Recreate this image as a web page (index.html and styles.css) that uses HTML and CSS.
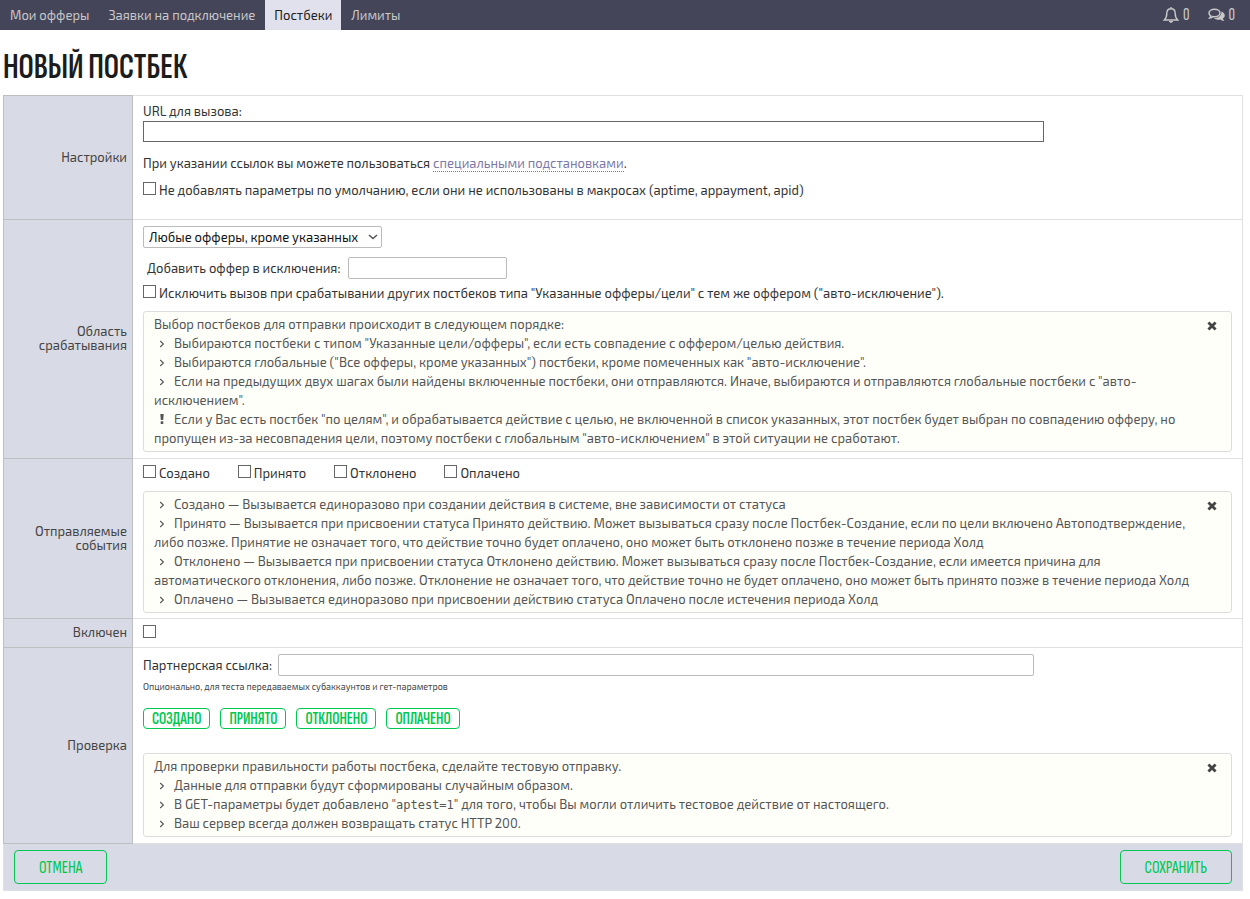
FILE: index.html
```html
<!DOCTYPE html>
<html lang="ru">
<head>
<meta charset="utf-8">
<title>Новый постбек</title>
<link rel="stylesheet" href="styles.css">
</head>
<body>
<svg class="sprite" aria-hidden="true">
  <symbol id="close" viewBox="0 0 10 10"><path d="M2.4 2.4L7.6 7.6M7.6 2.4L2.4 7.6" stroke="currentColor" stroke-width="2.8" stroke-linecap="square"/></symbol>
  <symbol id="angle" viewBox="0 0 6 8"><path d="M1.2 1L4.4 4L1.2 7" fill="none" stroke="currentColor" stroke-width="1.1"/></symbol>
  <symbol id="bang" viewBox="0 0 6 10"><path d="M1.3 0H4.7L4.2 6H1.8ZM1.7 7.2H4.3V10H1.7Z" fill="currentColor"/></symbol>
</svg>
<header class="topbar">
  <nav class="menu">
    <a href="#">Мои офферы</a>
    <a href="#">Заявки на подключение</a>
    <a href="#" class="active">Постбеки</a>
    <a href="#">Лимиты</a>
  </nav>
  <div class="counters">
    <a href="#" aria-label="Уведомления"><svg width="16" height="18" viewBox="0 0 16 18" fill="none" stroke="currentColor" stroke-width="1.4"><path d="M8 1V2.5M1.3 14C3.5 12 3.8 10 3.8 7.2C3.8 4.5 5.5 2.7 8 2.7S12.2 4.5 12.2 7.2C12.2 10 12.5 12 14.7 14Z"/><path d="M6 15H10C10 17.4 6 17.4 6 15Z" fill="currentColor" stroke="none"/></svg><span>0</span></a>
    <a href="#" aria-label="Сообщения"><svg width="17" height="14" viewBox="0 0 17 14"><path d="M6.5 1.2C9.6 1.2 12 2.9 12 5S9.6 8.8 6.5 8.8C5.9 8.8 5.3 8.7 4.8 8.6C3.8 9.5 2.8 9.8 1.8 9.9C2.4 9.3 2.7 8.7 2.8 7.9C1.6 7.2 1 6.2 1 5C1 2.9 3.4 1.2 6.5 1.2Z" fill="none" stroke="currentColor" stroke-width="1.5"/><path d="M13.3 3.6C17.5 5 17.7 8.8 14.9 10.4C15 11.3 15.6 12 16.4 12.9C14.6 13 13.4 12.4 12.4 11.5C10 12 7.5 11.5 6.1 10.2C10.5 10.2 14 7.4 13.3 3.6Z" fill="currentColor"/></svg><span>0</span></a>
  </div>
</header>
<main>
  <h1>Новый постбек</h1>
  <form class="form">
    <section class="row">
      <h2 class="name">Настройки</h2>
      <div class="body settings">
        <label class="line" for="url">URL для вызова:</label>
        <input class="url" id="url" type="text">
        <p class="line note">При указании ссылок вы можете пользоваться <a href="#">специальными подстановками</a>.</p>
        <label class="check"><input type="checkbox">Не добавлять параметры по умолчанию, если они не использованы в макросах (aptime, appayment, apid)</label>
      </div>
    </section>
    <section class="row">
      <h2 class="name">Область срабатывания</h2>
      <div class="body">
        <div class="select"><select aria-label="Офферы"><option>Любые офферы, кроме указанных</option></select><svg width="10" height="6" viewBox="0 0 10 6"><path d="M1 1L5 4.6L9 1" fill="none" stroke="currentColor" stroke-width="1.5"/></svg></div>
        <div class="field exclude"><label for="offer">Добавить оффер в исключения:</label><input id="offer" type="text"></div>
        <label class="check auto"><input type="checkbox">Исключить вызов при срабатывании других постбеков типа "Указанные офферы/цели" с тем же оффером ("авто-исключение").</label>
        <div class="hint">
          <button type="button" class="close" aria-label="Закрыть"><svg><use href="#close"/></svg></button>
          <p>Выбор постбеков для отправки происходит в следующем порядке:</p>
          <p><svg class="mark"><use href="#angle"/></svg>Выбираются постбеки с типом "Указанные цели/офферы", если есть совпадение с оффером/целью действия.</p>
          <p><svg class="mark"><use href="#angle"/></svg>Выбираются глобальные ("Все офферы, кроме указанных") постбеки, кроме помеченных как "авто-исключение".</p>
          <p><svg class="mark"><use href="#angle"/></svg>Если на предыдущих двух шагах были найдены включенные постбеки, они отправляются. Иначе, выбираются и отправляются глобальные постбеки с "авто-<br>исключением".</p>
          <p><svg class="mark bang"><use href="#bang"/></svg>Если у Вас есть постбек "по целям", и обрабатывается действие с целью, не включенной в список указанных, этот постбек будет выбран по совпадению офферу, но<br>пропущен из-за несовпадения цели, поэтому постбеки с глобальным "авто-исключением" в этой ситуации не сработают.</p>
        </div>
      </div>
    </section>
    <section class="row">
      <h2 class="name">Отправляемые события</h2>
      <div class="body events">
        <div class="checks">
          <label class="check"><input type="checkbox">Создано</label>
          <label class="check"><input type="checkbox">Принято</label>
          <label class="check"><input type="checkbox">Отклонено</label>
          <label class="check"><input type="checkbox">Оплачено</label>
        </div>
        <div class="hint">
          <button type="button" class="close" aria-label="Закрыть"><svg><use href="#close"/></svg></button>
          <p><svg class="mark"><use href="#angle"/></svg>Создано — Вызывается единоразово при создании действия в системе, вне зависимости от статуса</p>
          <p><svg class="mark"><use href="#angle"/></svg>Принято — Вызывается при присвоении статуса Принято действию. Может вызываться сразу после Постбек-Создание, если по цели включено Автоподтверждение,<br>либо позже. Принятие не означает того, что действие точно будет оплачено, оно может быть отклонено позже в течение периода Холд</p>
          <p><svg class="mark"><use href="#angle"/></svg>Отклонено — Вызывается при присвоении статуса Отклонено действию. Может вызываться сразу после Постбек-Создание, если имеется причина для<br>автоматического отклонения, либо позже. Отклонение не означает того, что действие точно не будет оплачено, оно может быть принято позже в течение периода Холд</p>
          <p><svg class="mark"><use href="#angle"/></svg>Оплачено — Вызывается единоразово при присвоении действию статуса Оплачено после истечения периода Холд</p>
        </div>
      </div>
    </section>
    <section class="row">
      <h2 class="name">Включен</h2>
      <div class="body enabled"><label class="check"><input type="checkbox" aria-label="Включен"></label></div>
    </section>
    <section class="row">
      <h2 class="name">Проверка</h2>
      <div class="body">
        <div class="field partner"><label for="partner">Партнерская ссылка:</label><input id="partner" type="text"></div>
        <p class="small">Опционально, для теста передаваемых субаккаунтов и гет-параметров</p>
        <div class="tests">
          <button type="button">Создано</button>
          <button type="button">Принято</button>
          <button type="button">Отклонено</button>
          <button type="button">Оплачено</button>
        </div>
        <div class="hint">
          <button type="button" class="close" aria-label="Закрыть"><svg><use href="#close"/></svg></button>
          <p>Для проверки правильности работы постбека, сделайте тестовую отправку.</p>
          <p><svg class="mark"><use href="#angle"/></svg>Данные для отправки будут сформированы случайным образом.</p>
          <p><svg class="mark"><use href="#angle"/></svg>В GET-параметры будет добавлено "<code>aptest=1</code>" для того, чтобы Вы могли отличить тестовое действие от настоящего.</p>
          <p><svg class="mark"><use href="#angle"/></svg>Ваш сервер всегда должен возвращать статус HTTP 200.</p>
        </div>
      </div>
    </section>
    <footer class="actions">
      <button type="button">Отмена</button>
      <button type="submit">Сохранить</button>
    </footer>
  </form>
</main>
</body>
</html>
```
FILE: styles.css
```css
* { box-sizing: border-box; }
body {
  margin: 0;
  background: #fff;
  color: #333;
  font: 13px/20px "Exo 2", Roboto, sans-serif;
}
p, h1, h2 { margin: 0; font-weight: inherit; }
input, select, button { font: inherit; margin: 0; }
svg { flex: none; }
.sprite { display: none; }

.topbar {
  display: flex;
  justify-content: space-between;
  height: 30px;
  padding: 0 15px 0 1px;
  background: #45455a;
  line-height: 30px;
}
.menu, .counters { display: flex; }
.topbar a { color: #c8c8c8; text-decoration: none; white-space: nowrap; }
.menu { gap: 1px; }
.menu a { padding: 0 9px; }
.menu .active { background: #e0e1ec; color: #222; }
.counters { gap: 18px; }
.counters a {
  display: flex;
  align-items: center;
  gap: 4px;
  font-family: "Sofia Sans Extra Condensed", Oswald, "Roboto Condensed", sans-serif;
  font-size: 18px;
}

main { padding: 0 7px 0 3px; }
h1 {
  padding: 18px 0 7px;
  color: #1c1c1c;
  font: 600 36px/40px "Sofia Sans Extra Condensed", "Fira Sans Extra Condensed", Oswald, sans-serif;
  text-transform: uppercase;
}
.form { border: solid #e0e0e0; border-width: 0 1px 1px 0; }
.row { display: flex; }
.name {
  display: flex;
  flex: none;
  align-items: center;
  justify-content: flex-end;
  width: 130px;
  padding: 0 5px 2px 20px;
  border: solid #bfbfc1;
  border-width: 1px 1px 0;
  background: #d8dae5;
  color: #444;
  font-size: 13px;
  line-height: 14px;
  text-align: right;
}
.body {
  flex: 1;
  min-width: 0;
  padding: 6px 10px;
  border-top: 1px solid #e0e0e0;
}
.row:last-of-type .name { border-bottom-width: 1px; }
.row:last-of-type .body { border-bottom: 1px solid #e0e0e0; }
.settings { padding: 5px 10px 19px; }
.line { display: block; }
.note { margin: 11px 0 7px; }
.note a { color: #7b78a8; text-decoration: none; border-bottom: 1px dotted #7b78a8; }
input[type="text"] {
  height: 22px;
  padding: 0 4px;
  border: 1px solid #bbb;
  border-radius: 2px;
  background: #fff;
}
input.url {
  display: block;
  width: 901px;
  max-width: 100%;
  height: 21px;
  border-color: #666;
  border-radius: 0;
}
.check { display: flex; gap: 3px; }
.check input {
  appearance: none;
  flex: none;
  width: 13px;
  height: 13px;
  margin-top: 2px;
  border: 1px solid #666;
  background: #fff;
}
.select { position: relative; width: 239px; color: #555; }
.select select {
  display: block;
  appearance: none;
  width: 100%;
  height: 22px;
  padding: 0 15px 0 5px;
  border: 1px solid #bbb;
  border-radius: 2px;
  background: #fff;
  color: #111;
}
.select svg { position: absolute; top: 8px; right: 4px; pointer-events: none; }
.field { display: flex; align-items: center; gap: 3px; }
.exclude { margin: 9px 0 4px; padding-left: 4px; }
.exclude label { min-width: 198px; }
.exclude input { width: 159px; }
.partner { max-width: 891px; }
.partner label { min-width: 132px; }
.partner input { flex: 1; min-width: 0; }

.hint {
  position: relative;
  margin-top: 8px;
  padding: 3px 10px;
  border: 1px solid #ddd;
  border-radius: 3px;
  background: #fffffa;
  color: #555;
  line-height: 19px;
}
.mark { width: 6px; height: 8px; margin: 0 9px 0 5px; }
.bang { height: 10px; }
.close {
  position: absolute;
  top: 9px;
  right: 14px;
  padding: 0;
  border: 0;
  background: none;
  color: #444;
}
.close svg { display: block; width: 10px; height: 10px; }
code { font: 12px/14px "DejaVu Sans Mono", monospace; }

.events { padding: 4px 10px 5px; }
.checks { display: flex; gap: 28px; }
.enabled { padding: 4px 10px; }
.enabled .check { height: 20px; }
.small { margin: 4px 0 14px; color: #444; font-size: 9px; line-height: 14px; }
.tests { display: flex; gap: 10px; margin-bottom: 24px; }
.tests button, .actions button {
  border: 1px solid #00c853;
  border-radius: 4px;
  background: #fff;
  color: #00c853;
  font-family: "Sofia Sans Extra Condensed", "Fira Sans Extra Condensed", Oswald, sans-serif;
  text-transform: uppercase;
}
.tests button { height: 21px; padding: 2px 8px 0; font-size: 17px; line-height: 17px; font-weight: 600; }
.actions {
  display: flex;
  justify-content: space-between;
  padding: 6px 10px;
  border-left: 1px solid #e0e0e0;
  background: #d8dae5;
}
.actions button { height: 34px; padding: 2px 24px 0; background: none; font-size: 19px; }
```
